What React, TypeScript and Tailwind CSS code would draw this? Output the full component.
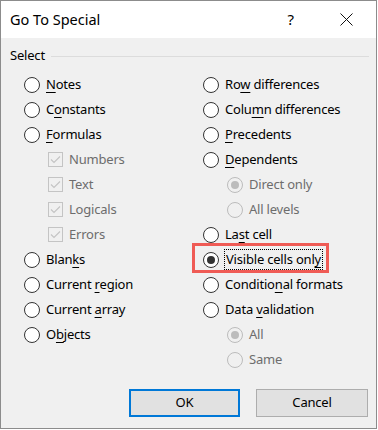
import React from "react";

const FONT = { fontFamily: '"Noto Sans", "Open Sans", sans-serif' };

function Radio({ checked = false, disabled = false }: { checked?: boolean; disabled?: boolean }) {
  return (
    <span
      className={`relative flex h-[16px] w-[16px] shrink-0 items-center justify-center rounded-full border ${
        disabled ? "border-[#bcbcbc] bg-[#f0f0f0]" : "border-[#333333] bg-white"
      }`}
    >
      {checked && (
        <span className={`h-[8px] w-[8px] rounded-full ${disabled ? "bg-[#bcbcbc]" : "bg-[#333333]"}`} />
      )}
    </span>
  );
}

function Check() {
  return (
    <span className="flex h-[15px] w-[15px] shrink-0 items-center justify-center border border-[#c4c4c4] bg-[#f0f0f0]">
      <svg width="11" height="11" viewBox="0 0 11 11">
        <polyline points="1,5.5 4,8.5 10,2.5" fill="none" stroke="#c4c4c4" strokeWidth="1.2" />
      </svg>
    </span>
  );
}

function Label({ text, u }: { text: string; u?: number }) {
  if (u === undefined) return <span>{text}</span>;
  return (
    <span>
      {text.slice(0, u)}
      <span className="underline underline-offset-[3px] decoration-1">{text[u]}</span>
      {text.slice(u + 1)}
    </span>
  );
}

function RadioRow({ text, u, checked, disabled, sub, focus }: { text: string; u?: number; checked?: boolean; disabled?: boolean; sub?: boolean; focus?: boolean }) {
  return (
    <div className={`flex h-[25px] items-center ${sub ? "pl-[24px]" : ""}`}>
      <Radio checked={checked} disabled={disabled} />
      <span
        className={`ml-[5px] ${disabled ? "text-[#6d6d6d]" : "text-black"} ${
          focus ? "border border-dotted border-black px-px leading-[19px]" : "px-px"
        }`}
      >
        <Label text={text} u={u} />
      </span>
    </div>
  );
}

function CheckRow({ text }: { text: string }) {
  return (
    <div className="flex h-[25px] items-center pl-[24px]">
      <Check />
      <span className="ml-[6px] text-[#6d6d6d]">{text}</span>
    </div>
  );
}

export default function App() {
  return (
    <div className="relative h-[429px] w-[377px] bg-white" style={FONT}>
      <div className="flex h-[429px] w-[377px] flex-col border border-[#8c8c8c] bg-[#f0f0f0] text-[13px] tracking-[-0.2px]">
        <div className="flex h-[37px] shrink-0 items-center bg-white tracking-normal">
          <span className="ml-[9px] text-[14.5px] text-black">Go To Special</span>
          <span className="ml-auto mr-[46px] text-[15px] text-black">?</span>
          <svg className="mr-[23px]" width="13" height="13" viewBox="0 0 13 13">
            <path d="M0.5 0.5 L12.5 12.5 M12.5 0.5 L0.5 12.5" stroke="#111" strokeWidth="1" />
          </svg>
        </div>
        <div className="mt-[8px] flex h-[20px] items-center">
          <span className="ml-[9px] text-black">Select</span>
          <span className="ml-[6px] mr-[7px] h-px flex-1 bg-[#dcdcdc]" />
        </div>
        <div className="mt-[6px] flex">
          <div className="ml-[23px] w-[179px]">
            <RadioRow text="Notes" u={0} />
            <RadioRow text="Constants" u={1} />
            <RadioRow text="Formulas" u={0} />
            <CheckRow text="Numbers" />
            <CheckRow text="Text" />
            <CheckRow text="Logicals" />
            <CheckRow text="Errors" />
            <RadioRow text="Blanks" u={4} />
            <RadioRow text="Current region" u={8} />
            <RadioRow text="Current array" u={8} />
            <RadioRow text="Objects" u={1} />
          </div>
          <div className="flex-1">
            <RadioRow text="Row differences" u={2} />
            <RadioRow text="Column differences" u={4} />
            <RadioRow text="Precedents" u={0} />
            <RadioRow text="Dependents" u={0} />
            <RadioRow text="Direct only" sub disabled checked />
            <RadioRow text="All levels" sub disabled />
            <RadioRow text="Last cell" u={2} />
            <RadioRow text="Visible cells only" u={17} checked focus />
            <RadioRow text="Conditional formats" u={8} />
            <RadioRow text="Data validation" u={5} />
            <RadioRow text="All" sub disabled checked />
            <RadioRow text="Same" sub disabled />
          </div>
        </div>
        <div className="mt-[17px] flex justify-end gap-[16px] pr-[8px]">
          <button className="flex h-[28px] w-[111px] items-center justify-center border-2 border-[#0078d7] bg-[#e1e1e1] text-black">
            OK
          </button>
          <button className="flex h-[28px] w-[112px] items-center justify-center border border-[#adadad] bg-[#e1e1e1] text-black">
            Cancel
          </button>
        </div>
      </div>
      <div className="pointer-events-none absolute left-[192px] top-[243px] h-[30px] w-[137px] border-[3px] border-[#ef5b55]" />
    </div>
  );
}
